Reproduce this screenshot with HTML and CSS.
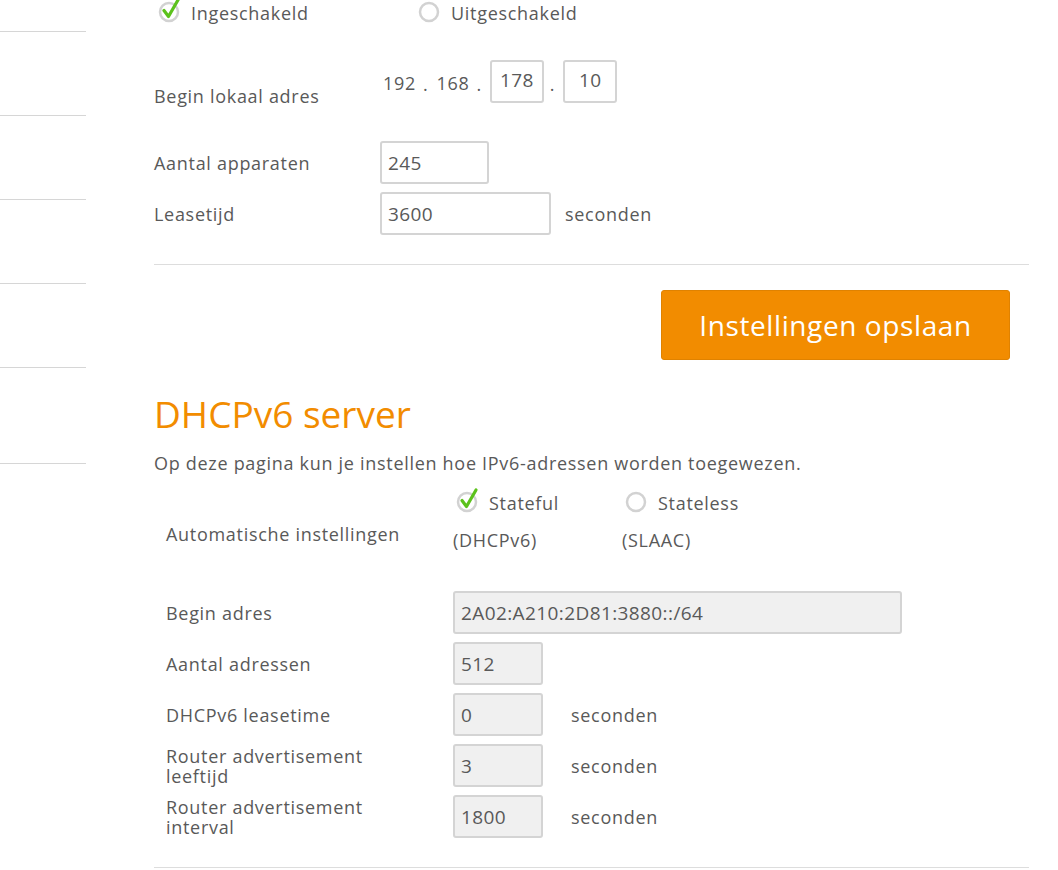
FILE: index.html
```html
<!DOCTYPE html>
<html>

<head>
    <meta charset="UTF-8">
    <link rel="stylesheet" href="styles.css">
</head>

<body>
    <div class="page">
        <nav class="sidebar">
            <div class="nav-item nav-item-first"></div>
            <div class="nav-item"></div>
            <div class="nav-item"></div>
            <div class="nav-item"></div>
            <div class="nav-item"></div>
            <div class="nav-item nav-item-last"></div>
        </nav>

        <main class="content">
            <div class="radio-row">
                <label class="radio radio-on">
                    <svg class="radio-icon" viewBox="0 0 28 28" width="28" height="28">
                        <circle cx="11" cy="15" r="9" fill="none" stroke="#d2d2d2" stroke-width="2.5" />
                        <path d="M6 13.5 L10.5 19.5 L20 3" fill="none" stroke="#5cc21c" stroke-width="3.2" stroke-linecap="round" stroke-linejoin="round" />
                    </svg>
                    Ingeschakeld
                </label>
                <label class="radio">
                    <svg class="radio-icon" viewBox="0 0 28 28" width="28" height="28">
                        <circle cx="11" cy="15" r="9" fill="none" stroke="#d2d2d2" stroke-width="2.5" />
                    </svg>
                    Uitgeschakeld
                </label>
            </div>

            <div class="form-row ip-row">
                <div class="label">Begin lokaal adres</div>
                <div class="ip">
                    <span class="ip-part">192</span><span class="ip-dot">.</span>
                    <span class="ip-part">168</span><span class="ip-dot">.</span>
                    <span class="input input-ip">178</span><span class="ip-dot ip-dot-box">.</span>
                    <span class="input input-ip">10</span>
                </div>
            </div>

            <div class="form-row">
                <div class="label">Aantal apparaten</div>
                <span class="input input-small">245</span>
            </div>
            <div class="form-row">
                <div class="label">Leasetijd</div>
                <span class="input input-medium">3600</span>
                <span class="unit">seconden</span>
            </div>

            <hr class="divider">

            <div class="actions">
                <button class="button-primary">Instellingen opslaan</button>
            </div>

            <h1>DHCPv6 server</h1>
            <p class="intro">Op deze pagina kun je instellen hoe IPv6-adressen worden toegewezen.</p>

            <div class="v6">
                <div class="v6-row v6-mode">
                    <div class="v6-label">Automatische instellingen</div>
                    <div class="mode-options">
                        <div class="mode">
                            <label class="radio radio-on">
                                <svg class="radio-icon" viewBox="0 0 28 28" width="28" height="28">
                                    <circle cx="11" cy="15" r="9" fill="none" stroke="#d2d2d2" stroke-width="2.5" />
                                    <path d="M6 13.5 L10.5 19.5 L20 3" fill="none" stroke="#5cc21c" stroke-width="3.2" stroke-linecap="round" stroke-linejoin="round" />
                                </svg>
                                Stateful
                            </label>
                            <div class="mode-note">(DHCPv6)</div>
                        </div>
                        <div class="mode">
                            <label class="radio">
                                <svg class="radio-icon" viewBox="0 0 28 28" width="28" height="28">
                                    <circle cx="11" cy="15" r="9" fill="none" stroke="#d2d2d2" stroke-width="2.5" />
                                </svg>
                                Stateless
                            </label>
                            <div class="mode-note">(SLAAC)</div>
                        </div>
                    </div>
                </div>

                <div class="v6-row">
                    <div class="v6-label">Begin adres</div>
                    <span class="input input-disabled input-wide">2A02:A210:2D81:3880::/64</span>
                </div>
                <div class="v6-row">
                    <div class="v6-label">Aantal adressen</div>
                    <span class="input input-disabled input-num">512</span>
                </div>
                <div class="v6-row">
                    <div class="v6-label">DHCPv6 leasetime</div>
                    <span class="input input-disabled input-num">0</span>
                    <span class="unit unit-v6">seconden</span>
                </div>
                <div class="v6-row">
                    <div class="v6-label">Router advertisement leeftijd</div>
                    <span class="input input-disabled input-num">3</span>
                    <span class="unit unit-v6">seconden</span>
                </div>
                <div class="v6-row">
                    <div class="v6-label">Router advertisement interval</div>
                    <span class="input input-disabled input-num">1800</span>
                    <span class="unit unit-v6">seconden</span>
                </div>
            </div>

            <hr class="divider divider-bottom">
        </main>
    </div>
</body>

</html>
```

FILE: styles.css
```css
body {
    margin: 0;
    background: #ffffff;
    font-family: "Open Sans", sans-serif;
    font-size: 18px;
    letter-spacing: 0.7px;
    color: #595959;
}

.page {
    display: flex;
    height: 870px;
    overflow: hidden;
}

.sidebar {
    width: 86px;
    flex-shrink: 0;
}

.nav-item {
    height: 83px;
    border-bottom: 1px solid #d6d6d6;
}

.nav-item-first {
    height: 31px;
}

.nav-item-last {
    height: 95px;
}

.content {
    margin-left: 68px;
    width: 875px;
}

.radio-row {
    display: flex;
    height: 26px;
}

.radio {
    display: flex;
    align-items: center;
    gap: 5px;
    line-height: 26px;
}

.radio-row .radio {
    width: 256px;
    margin-left: 4px;
    margin-top: -1px;
}

.radio-icon {
    flex-shrink: 0;
    margin-top: -4px;
}

.form-row {
    display: flex;
    align-items: center;
    height: 43px;
    margin-bottom: 8px;
}

.label {
    width: 226px;
}

.ip-row {
    margin-top: 34px;
    margin-bottom: 38px;
}

.ip-row .label {
    margin-top: 28px;
}

.ip {
    display: flex;
    align-items: center;
    margin-left: 3px;
}

.ip-part {
    margin-top: 2px;
}

.ip-dot {
    margin: 4px 8px 0 7px;
}

.ip-dot-box {
    margin: 4px 8px 0 6px;
}

.input {
    box-sizing: border-box;
    display: flex;
    align-items: center;
    height: 43px;
    padding: 0 6px;
    border: 2px solid #d4d4d4;
    border-radius: 3px;
    background: #ffffff;
    color: #595959;
    font-size: 19px;
    letter-spacing: 0.4px;
}

.input-ip {
    width: 54px;
    justify-content: center;
    padding-bottom: 3px;
}

.input-small {
    width: 109px;
}

.input-medium {
    width: 171px;
}

.unit {
    margin-left: 14px;
}

.divider {
    border: none;
    border-top: 1px solid #dddddd;
    margin: 29px 0 0 0;
}

.actions {
    display: flex;
    justify-content: flex-end;
    padding: 25px 19px 0 0;
}

.button-primary {
    width: 349px;
    height: 70px;
    border: 1px solid #e08200;
    border-radius: 3px;
    background: #f28c00;
    color: #ffffff;
    font-family: inherit;
    font-size: 28px;
    letter-spacing: 0.6px;
}

h1 {
    margin: 30px 0 0 0;
    font-weight: normal;
    font-size: 37px;
    line-height: 48px;
    letter-spacing: 0;
    color: #f28c00;
}

.intro {
    margin: 13px 0 0 0;
    line-height: 24px;
}

.v6 {
    padding-left: 12px;
}

.v6-row {
    display: flex;
    align-items: center;
    min-height: 43px;
    margin-bottom: 8px;
}

.v6-label {
    width: 287px;
    flex-shrink: 0;
    padding-right: 70px;
    box-sizing: border-box;
    line-height: 20px;
}

.v6-mode {
    align-items: flex-start;
    margin-top: 15px;
    margin-bottom: 39px;
}

.v6-mode .v6-label {
    margin-top: 32px;
    line-height: 24px;
    padding-right: 0;
}

.mode-options {
    display: flex;
}

.mode {
    width: 169px;
}

.mode .radio {
    margin-left: 3px;
}

.mode-note {
    margin-top: 12px;
    line-height: 24px;
}

.input-disabled {
    background: #f0f0f0;
}

.input-wide {
    width: 449px;
}

.input-num {
    width: 90px;
}

.unit-v6 {
    margin-left: 28px;
}

.divider-bottom {
    margin-top: 29px;
}
```
